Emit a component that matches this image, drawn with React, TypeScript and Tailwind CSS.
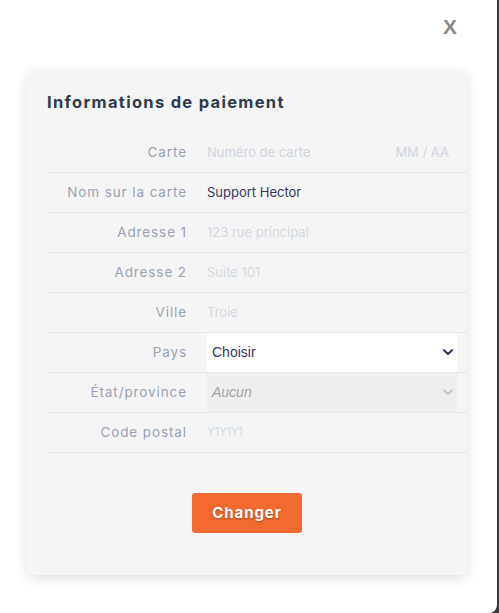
import React from "react";

const font = { fontFamily: "Inter, 'Noto Sans', sans-serif" } as React.CSSProperties;

function Row({ label, children }: { label: string; children: React.ReactNode }) {
  return (
    <div className="flex items-center h-[40px] border-b border-[#e8e8e8]">
      <div className="w-[140px] shrink-0 text-right text-[13.5px] tracking-[0.9px] text-[#9aa3b5]">{label}</div>
      <div className="ml-[20px] flex-1 h-full flex items-center pr-[10px]">{children}</div>
    </div>
  );
}

function Chevron({ color }: { color: string }) {
  return (
    <svg width="10" height="7" viewBox="0 0 10 7" fill="none">
      <path d="M1 1.2 L5 5 L9 1.2" stroke={color} strokeWidth="2" strokeLinecap="round" strokeLinejoin="round" />
    </svg>
  );
}

export default function App() {
  return (
    <div className="w-[499px] h-[613px] bg-[#3a3a3a] overflow-hidden" style={font}>
      <div className="w-[497px] h-[613px] bg-white rounded-br-[8px] flex flex-col">
        <div className="h-[50px] flex items-center justify-end pr-[40px] pt-[2px]">
          <span className="text-[21px] font-bold text-[#8a8a8a] leading-none" style={{ fontFamily: "'Liberation Sans', Arial, sans-serif" }}>X</span>
        </div>
        <div className="ml-[27px] mt-[21px] w-[440px] h-[504px] bg-[#f5f5f5] rounded-[6px] shadow-[0_3px_14px_rgba(0,0,0,0.13)] pl-[20px] pt-[19px] flex flex-col">
          <div className="text-[16.5px] leading-[24px] font-bold text-[#2f3a4b] tracking-[1.3px]">Informations de paiement</div>
          <div className="mt-[19px] flex flex-col">
            <Row label="Carte">
              <div className="flex-1 flex justify-between text-[13px] text-[#cfd6e1] pr-[8px]">
                <span>Numéro de carte</span>
                <span>MM / AA</span>
              </div>
            </Row>
            <Row label="Nom sur la carte">
              <span className="text-[13px] text-[#37365a]">Support Hector</span>
            </Row>
            <Row label="Adresse 1">
              <span className="text-[13px] text-[#d3d9e3]">123 rue principal</span>
            </Row>
            <Row label="Adresse 2">
              <span className="text-[13px] text-[#d3d9e3]">Suite 101</span>
            </Row>
            <Row label="Ville">
              <span className="text-[13px] text-[#d3d9e3]">Troie</span>
            </Row>
            <Row label="Pays">
              <div className="flex-1 h-full bg-white flex items-center justify-between pl-[5px] pr-[4px]" style={{ fontFamily: "'Liberation Sans', Arial, sans-serif" }}>
                <span className="text-[14px] text-[#37365a]">Choisir</span>
                <Chevron color="#2f2e55" />
              </div>
            </Row>
            <Row label="État/province">
              <div className="flex-1 h-full bg-[#efefef] flex items-center justify-between pl-[5px] pr-[4px]" style={{ fontFamily: "'Liberation Sans', Arial, sans-serif" }}>
                <span className="text-[14px] italic text-[#a3a3a3]">Aucun</span>
                <Chevron color="#c4c4c4" />
              </div>
            </Row>
            <Row label="Code postal">
              <span className="text-[11.5px] text-[#d3d9e3] tracking-[-0.3px]">Y1Y1Y1</span>
            </Row>
          </div>
          <div className="flex justify-center mt-[40px] pr-[20px]">
            <button className="w-[110px] h-[40px] bg-[#f36a30] rounded-[3px] text-white text-[15px] font-bold tracking-[0.9px] [text-shadow:0_1px_2px_rgba(0,0,0,0.35)]">
              Changer
            </button>
          </div>
        </div>
      </div>
    </div>
  );
}
